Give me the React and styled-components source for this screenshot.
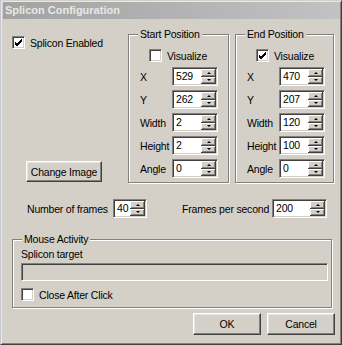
import React from 'react'
import styled, { createGlobalStyle } from 'styled-components'

const Global = createGlobalStyle`
  html, body { margin: 0; padding: 0; background: #d4d0c8; }
  * { box-sizing: border-box; }
`

const Spinner = ({ value, w }) => (
  <SpinBox w={w}>
    <SpinValue>{value}</SpinValue>
    <SpinButtons>
      <SpinBtn><ArrowUp /></SpinBtn>
      <SpinBtn><ArrowDown /></SpinBtn>
    </SpinButtons>
  </SpinBox>
)

const Check = ({ checked }) => (
  <CheckBox>
    {checked && (
      <svg width="9" height="9" viewBox="0 0 9 9">
        <path d="M1 4 L3 6 L8 1 M1 5 L3 7 L8 2 M1 6 L3 8 L8 3" stroke="#000" strokeWidth="1" fill="none" />
      </svg>
    )}
  </CheckBox>
)

const PositionGroup = ({ title, visualize, values, w }) => (
  <Group w={w}>
    <GroupTitle>{title}</GroupTitle>
    <VisualizeRow>
      <Check checked={visualize} />
      <span>Visualize</span>
    </VisualizeRow>
    <Fields>
      {['X', 'Y', 'Width', 'Height', 'Angle'].map((label, i) => (
        <React.Fragment key={label}>
          <span>{label}</span>
          <Spinner value={values[i]} w={46} />
        </React.Fragment>
      ))}
    </Fields>
  </Group>
)

const App = () => {
  return (
    <Window>
      <Global />
      <TitleBar>Splicon Configuration</TitleBar>
      <Body>
        <TopRow>
          <LeftCol>
            <CheckRow>
              <Check checked />
              <span>Splicon Enabled</span>
            </CheckRow>
            <ChangeButton>Change Image</ChangeButton>
          </LeftCol>
          <PositionGroup title="Start Position" values={['529', '262', '2', '2', '0']} w={101} />
          <PositionGroup title="End Position" visualize values={['470', '207', '120', '100', '0']} w={99} />
        </TopRow>

        <FramesRow>
          <span>Number of frames</span>
          <Spinner value="40" w={34} />
          <span />
          <span>Frames per second</span>
          <Spinner value="200" w={55} />
        </FramesRow>

        <MouseGroup>
          <GroupTitle>Mouse Activity</GroupTitle>
          <TargetLabel>Splicon target</TargetLabel>
          <TargetField />
          <CheckRow>
            <Check />
            <span>Close After Click</span>
          </CheckRow>
        </MouseGroup>

        <ButtonRow>
          <Button>OK</Button>
          <Button>Cancel</Button>
        </ButtonRow>
      </Body>
    </Window>
  )
}

export default App

const Window = styled.div`
  width: 342px;
  height: 345px;
  display: flex;
  flex-direction: column;
  background: #d4d0c8;
  border: 1px solid;
  border-color: #d4d0c8 #404040 #404040 #c4c6d4;
  box-shadow: inset 1px 1px 0 #e8e8f0, inset -1px -1px 0 #808080;
  padding: 1px 1px 1px 2px;
  font-family: "Liberation Sans", Arial, sans-serif;
  font-size: 10.5px;
  letter-spacing: -0.2px;
  white-space: nowrap;
  color: #000;
`

const TitleBar = styled.div`
  height: 17px;
  flex: none;
  background: linear-gradient(to right, #a2a2a2, #c2c2c2);
  color: #e8e8e8;
  font-weight: bold;
  font-size: 11px;
  letter-spacing: 0;
  line-height: 17px;
  padding-left: 2px;
`

const Body = styled.div`
  flex: 1;
  display: flex;
  flex-direction: column;
  padding: 15px 0 0 9px;
`

const TopRow = styled.div`
  display: flex;
  gap: 6px;
`

const LeftCol = styled.div`
  width: 110px;
  display: flex;
  flex-direction: column;
  justify-content: space-between;
  align-items: flex-start;
  padding-top: 2px;
`

const CheckRow = styled.label`
  display: flex;
  align-items: center;
  gap: 5px;
  height: 13px;
`

const CheckBox = styled.span`
  width: 13px;
  height: 13px;
  flex: none;
  display: flex;
  align-items: center;
  justify-content: center;
  background: #fff;
  border: 1px solid;
  border-color: #808080 #fff #fff #808080;
  box-shadow: inset 1px 1px 0 #404040, inset -1px -1px 0 #d4d0c8;
`

const Group = styled.div`
  position: relative;
  width: ${p => p.w}px;
  height: 149px;
  border: 1px solid #808080;
  box-shadow: inset 1px 1px 0 #fff, 1px 1px 0 #fff;
  padding: 14px 0 0 11px;
`

const GroupTitle = styled.span`
  position: absolute;
  top: -7px;
  left: 9px;
  padding: 0 2px;
  background: #d4d0c8;
  line-height: 13px;
`

const VisualizeRow = styled(CheckRow)`
  padding-left: 9px;
`

const Fields = styled.div`
  display: grid;
  grid-template-columns: 32px 46px;
  grid-auto-rows: 19px;
  row-gap: 4px;
  align-items: center;
  margin-top: 5px;
`

const SpinBox = styled.div`
  width: ${p => p.w}px;
  height: 19px;
  display: flex;
  background: #fff;
  border: 1px solid;
  border-color: #808080 #fff #fff #808080;
  box-shadow: inset 1px 1px 0 #404040, inset -1px -1px 0 #d4d0c8;
  padding: 1px;
`

const SpinValue = styled.span`
  flex: 1;
  padding-left: 2px;
  line-height: 15px;
`

const SpinButtons = styled.div`
  width: 15px;
  display: flex;
  flex-direction: column;
`

const SpinBtn = styled.div`
  flex: 1;
  display: flex;
  align-items: center;
  justify-content: center;
  background: #d4d0c8;
  box-shadow: inset -1px -1px 0 #404040, inset 1px 1px 0 #fff, inset -2px -2px 0 #808080;
`

const ArrowUp = styled.span`
  width: 0;
  height: 0;
  border-left: 2px solid transparent;
  border-right: 2px solid transparent;
  border-bottom: 2px solid #000;
`

const ArrowDown = styled(ArrowUp)`
  border-bottom: none;
  border-top: 2px solid #000;
`

const Button = styled.button`
  width: 68px;
  height: 22px;
  font-family: inherit;
  font-size: 10.5px;
  letter-spacing: -0.2px;
  color: #000;
  background: #d4d0c8;
  border: 1px solid;
  border-color: #fff #404040 #404040 #fff;
  box-shadow: inset -1px -1px 0 #808080, inset 1px 1px 0 #e4e4e4;
  padding: 0;
`

const ChangeButton = styled(Button)`
  width: 76px;
  height: 21px;
  margin: 0 0 1px 14px;
`

const FramesRow = styled.div`
  display: grid;
  grid-template-columns: 86px 34px 35px 90px 55px;
  align-items: center;
  height: 18px;
  margin: 16px 0 0 15px;
`

const MouseGroup = styled.div`
  position: relative;
  width: 320px;
  height: 69px;
  margin-top: 22px;
  border: 1px solid #808080;
  box-shadow: inset 1px 1px 0 #fff, 1px 1px 0 #fff;
  padding: 8px 3px 0 8px;
  display: flex;
  flex-direction: column;
`

const TargetLabel = styled.span`
  line-height: 13px;
`

const TargetField = styled.div`
  height: 18px;
  margin-top: 2px;
  margin-bottom: 7px;
  background: #d4d0c8;
  border: 1px solid;
  border-color: #808080 #fff #fff #808080;
  box-shadow: inset 1px 1px 0 #404040, inset -1px -1px 0 #d4d0c8;
`

const ButtonRow = styled.div`
  display: flex;
  justify-content: flex-end;
  gap: 6px;
  margin-top: 5px;
  padding-right: 5px;
`
